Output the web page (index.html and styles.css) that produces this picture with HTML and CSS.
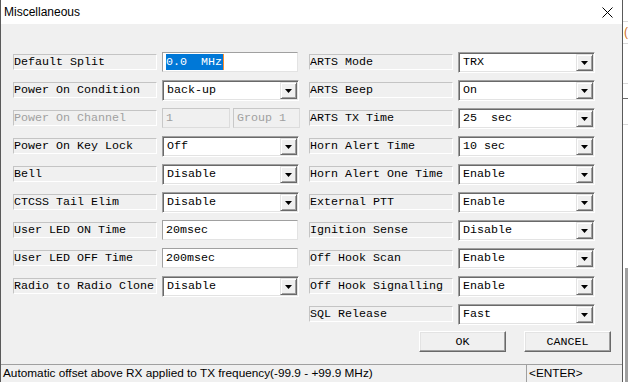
FILE: index.html
```html
<!DOCTYPE html>
<html>
<head>
<meta charset="utf-8">
<link rel="stylesheet" href="styles.css">
</head>
<body>
<div class="screen">
  <div class="dialog">
    <div class="titlebar">
      <span class="title">Miscellaneous</span>
      <svg class="close" width="11" height="11" viewBox="0 0 11 11"><path d="M0.5 0.5 L10.5 10.5 M10.5 0.5 L0.5 10.5" stroke="#000" stroke-width="1" fill="none"/></svg>
    </div>
    <div class="body">
      <div class="grid">
        <div class="lbl">Default Split</div>
        <div class="edit"><span class="sel">0.0  MHz</span><span class="caret"></span></div>
        <div class="lbl">ARTS Mode</div>
        <div class="combo"><span class="val">TRX</span><span class="cbtn"><svg width="7" height="4" viewBox="0 0 7 4"><polygon points="0,0 7,0 3.5,4" fill="#000"/></svg></span></div>

        <div class="lbl">Power On Condition</div>
        <div class="combo"><span class="val">back-up</span><span class="cbtn"><svg width="7" height="4" viewBox="0 0 7 4"><polygon points="0,0 7,0 3.5,4" fill="#000"/></svg></span></div>
        <div class="lbl">ARTS Beep</div>
        <div class="combo"><span class="val">On</span><span class="cbtn"><svg width="7" height="4" viewBox="0 0 7 4"><polygon points="0,0 7,0 3.5,4" fill="#000"/></svg></span></div>

        <div class="lbl dis">Power On Channel</div>
        <div class="pair"><div class="edit off narrow">1</div><div class="edit off narrow2">Group 1</div></div>
        <div class="lbl">ARTS TX Time</div>
        <div class="combo"><span class="val">25  sec</span><span class="cbtn"><svg width="7" height="4" viewBox="0 0 7 4"><polygon points="0,0 7,0 3.5,4" fill="#000"/></svg></span></div>

        <div class="lbl">Power On Key Lock</div>
        <div class="combo"><span class="val">Off</span><span class="cbtn"><svg width="7" height="4" viewBox="0 0 7 4"><polygon points="0,0 7,0 3.5,4" fill="#000"/></svg></span></div>
        <div class="lbl">Horn Alert Time</div>
        <div class="combo"><span class="val">10 sec</span><span class="cbtn"><svg width="7" height="4" viewBox="0 0 7 4"><polygon points="0,0 7,0 3.5,4" fill="#000"/></svg></span></div>

        <div class="lbl">Bell</div>
        <div class="combo"><span class="val">Disable</span><span class="cbtn"><svg width="7" height="4" viewBox="0 0 7 4"><polygon points="0,0 7,0 3.5,4" fill="#000"/></svg></span></div>
        <div class="lbl">Horn Alert One Time</div>
        <div class="combo"><span class="val">Enable</span><span class="cbtn"><svg width="7" height="4" viewBox="0 0 7 4"><polygon points="0,0 7,0 3.5,4" fill="#000"/></svg></span></div>

        <div class="lbl">CTCSS Tail Elim</div>
        <div class="combo"><span class="val">Disable</span><span class="cbtn"><svg width="7" height="4" viewBox="0 0 7 4"><polygon points="0,0 7,0 3.5,4" fill="#000"/></svg></span></div>
        <div class="lbl">External PTT</div>
        <div class="combo"><span class="val">Enable</span><span class="cbtn"><svg width="7" height="4" viewBox="0 0 7 4"><polygon points="0,0 7,0 3.5,4" fill="#000"/></svg></span></div>

        <div class="lbl">User LED ON Time</div>
        <div class="edit">20msec</div>
        <div class="lbl">Ignition Sense</div>
        <div class="combo"><span class="val">Disable</span><span class="cbtn"><svg width="7" height="4" viewBox="0 0 7 4"><polygon points="0,0 7,0 3.5,4" fill="#000"/></svg></span></div>

        <div class="lbl">User LED OFF Time</div>
        <div class="edit">200msec</div>
        <div class="lbl">Off Hook Scan</div>
        <div class="combo"><span class="val">Enable</span><span class="cbtn"><svg width="7" height="4" viewBox="0 0 7 4"><polygon points="0,0 7,0 3.5,4" fill="#000"/></svg></span></div>

        <div class="lbl">Radio to Radio Clone</div>
        <div class="combo"><span class="val">Disable</span><span class="cbtn"><svg width="7" height="4" viewBox="0 0 7 4"><polygon points="0,0 7,0 3.5,4" fill="#000"/></svg></span></div>
        <div class="lbl">Off Hook Signalling</div>
        <div class="combo"><span class="val">Enable</span><span class="cbtn"><svg width="7" height="4" viewBox="0 0 7 4"><polygon points="0,0 7,0 3.5,4" fill="#000"/></svg></span></div>

        <div class="empty"></div>
        <div class="empty"></div>
        <div class="lbl">SQL Release</div>
        <div class="combo"><span class="val">Fast</span><span class="cbtn"><svg width="7" height="4" viewBox="0 0 7 4"><polygon points="0,0 7,0 3.5,4" fill="#000"/></svg></span></div>
      </div>
      <div class="buttons">
        <div class="pbtn">OK</div>
        <div class="pbtn">CANCEL</div>
      </div>
    </div>
    <div class="status">
      <div class="pane main">Automatic offset above RX applied to TX frequency(-99.9 - +99.9 MHz)</div>
      <div class="pane key">&lt;ENTER&gt;</div>
    </div>
  </div>
  <div class="bgapp">
    <div class="hl l1"></div>
    <div class="hl l2"></div>
    <span class="frag f1">(</span>
    <div class="hl l3"></div>
    <div class="hl l4"></div>
    <div class="hl l5"></div>
    <div class="graybox"></div>
  </div>
</div>
</body>
</html>
```

FILE: styles.css
```css
* { box-sizing: border-box; }
html, body { margin: 0; padding: 0; }
body {
  width: 628px;
  height: 382px;
  overflow: hidden;
  background: #fff;
}
.screen {
  display: flex;
  height: 382px;
}
.dialog {
  width: 623px;
  flex: none;
  display: flex;
  flex-direction: column;
  background: #f0f0f0;
  border-left: 1px solid #5a5a5a;
  border-right: 1px solid #5a5a5a;
}
.titlebar {
  height: 24px;
  flex: none;
  background: #fff;
  display: flex;
  align-items: center;
  justify-content: space-between;
  padding: 0 9px 0 3px;
  font: 12px "Liberation Sans", Arial, sans-serif;
  color: #000;
}
.close { display: block; }
.body {
  flex: 1;
  padding: 24px 11px 0 12px;
}
.grid {
  display: grid;
  grid-template-columns: 149px 147px 149px 137px;
  grid-auto-rows: 28px;
  align-items: center;
  font: 11.67px "Liberation Mono", "Courier New", monospace;
  color: #000;
}
.lbl {
  width: 144px;
  height: 16px;
  border: 1px solid;
  border-color: #c4c4c4 #fff #fff #c4c4c4;
  line-height: 15px;
  white-space: pre;
  overflow: hidden;
}
.lbl.dis { color: #a0a0a0; }
.edit {
  width: 136px;
  height: 20px;
  background: #fff;
  border: 1px solid;
  border-color: #a0a0a0 #e3e3e3 #e3e3e3 #a0a0a0;
  padding: 1px 0 0 3px;
  line-height: 16px;
  white-space: pre;
  display: flex;
  align-items: flex-start;
}
.sel {
  background: #0078d7;
  color: #fff;
  height: 16px;
  line-height: 16px;
  padding-right: 1px;
}
.caret {
  width: 1px;
  height: 16px;
  background: #ff8b28;
}
.pair {
  display: flex;
  gap: 3px;
}
.edit.off {
  background: #f0f0f0;
  color: #a0a0a0;
  border-color: #c8c8c8 #dcdcdc #dcdcdc #c8c8c8;
}
.edit.narrow { width: 68px; }
.edit.narrow2 { width: 67px; }
.combo {
  width: 137px;
  height: 21px;
  background: #fff;
  border: 1px solid;
  border-color: #a0a0a0 #fff #fff #a0a0a0;
  box-shadow: inset 1px 1px #696969, inset -1px -1px #e3e3e3;
  padding: 1px;
  display: flex;
  align-items: center;
}
.val {
  flex: 1;
  padding-left: 3px;
  white-space: pre;
  line-height: 17px;
}
.cbtn {
  width: 17px;
  height: 17px;
  flex: none;
  background: #f0f0f0;
  border: 1px solid;
  border-color: #e3e3e3 #696969 #696969 #e3e3e3;
  box-shadow: inset 1px 1px #fff, inset -1px -1px #a0a0a0;
  display: flex;
  align-items: center;
  justify-content: center;
}
.cbtn svg { display: block; margin-top: 1px; }
.buttons {
  display: flex;
  justify-content: flex-end;
  gap: 18px;
  margin-top: 3px;
}
.pbtn {
  width: 87px;
  height: 21px;
  border: 1px solid;
  border-color: #fff #696969 #696969 #fff;
  box-shadow: inset -1px -1px #a0a0a0, inset 1px 1px #e3e3e3;
  background: #f0f0f0;
  font: 11.67px "Liberation Mono", "Courier New", monospace;
  color: #000;
  display: flex;
  align-items: center;
  justify-content: center;
}
.status {
  height: 18px;
  flex: none;
  border-top: 1px solid #a0a0a0;
  display: flex;
  font: 11.8px "Liberation Sans", Arial, sans-serif;
  color: #000;
  line-height: 16px;
}
.pane { white-space: nowrap; overflow: hidden; }
.main {
  width: 525px;
  padding-left: 2px;
}
.key {
  flex: 1;
  border-left: 1px solid #a0a0a0;
  padding-left: 2px;
}
.bgapp {
  flex: 1;
  position: relative;
  overflow: hidden;
  background: #fff;
}
.hl {
  position: absolute;
  left: 0;
  right: 0;
  height: 1px;
  background: #d9d9d9;
}
.l1 { top: 21px; }
.l2 { top: 43px; }
.l3 { top: 83px; }
.l4 { top: 98px; background: #6a6a6a; }
.l5 { top: 124px; }
.frag {
  position: absolute;
  left: 1px;
  font: 12px "Liberation Sans", Arial, sans-serif;
  line-height: 12px;
  color: #d07020;
}
.f1 { top: 26px; }
.graybox {
  position: absolute;
  left: 2px;
  right: 0;
  top: 268px;
  bottom: 0;
  background: #a0a0a0;
}
```
